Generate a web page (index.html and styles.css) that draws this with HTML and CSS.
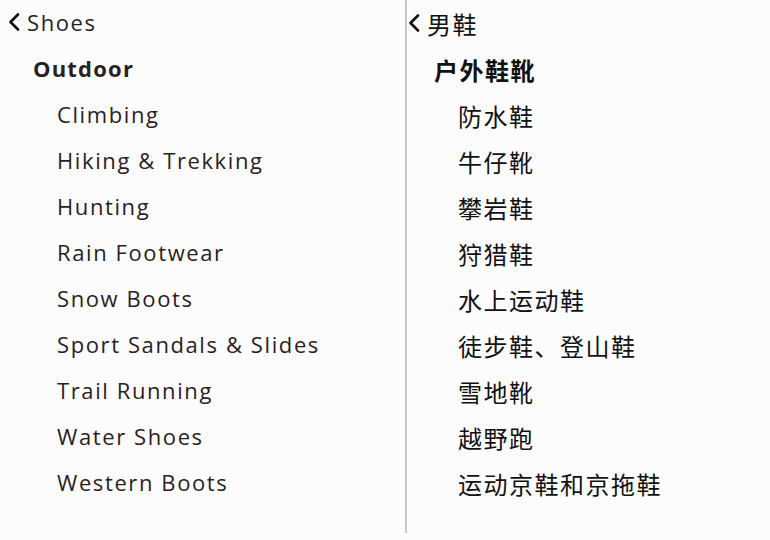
FILE: index.html
```html
<!DOCTYPE html>
<html lang="zh">
<head>
<meta charset="utf-8">
<link rel="stylesheet" href="styles.css">
</head>
<body>
<div class="page">
  <section class="panel panel-en">
    <div class="row back"><svg class="chev" viewBox="0 0 12 18" width="12" height="18"><polyline points="10,1.5 2.5,9 10,16.5" fill="none" stroke="#111" stroke-width="2.6" stroke-linecap="round" stroke-linejoin="round"/></svg><span>Shoes</span></div>
    <div class="row head">Outdoor</div>
    <div class="row item">Climbing</div>
    <div class="row item">Hiking &amp; Trekking</div>
    <div class="row item">Hunting</div>
    <div class="row item">Rain Footwear</div>
    <div class="row item">Snow Boots</div>
    <div class="row item">Sport Sandals &amp; Slides</div>
    <div class="row item">Trail Running</div>
    <div class="row item">Water Shoes</div>
    <div class="row item">Western Boots</div>
  </section>
  <div class="divider"></div>
  <section class="panel panel-zh">
    <div class="row back"><svg class="chev" viewBox="0 0 12 18" width="12" height="18"><polyline points="10,1.5 2.5,9 10,16.5" fill="none" stroke="#111" stroke-width="2.6" stroke-linecap="round" stroke-linejoin="round"/></svg><span>男鞋</span></div>
    <div class="row head">户外鞋靴</div>
    <div class="row item">防水鞋</div>
    <div class="row item">牛仔靴</div>
    <div class="row item">攀岩鞋</div>
    <div class="row item">狩猎鞋</div>
    <div class="row item">水上运动鞋</div>
    <div class="row item">徒步鞋、登山鞋</div>
    <div class="row item">雪地靴</div>
    <div class="row item">越野跑</div>
    <div class="row item">运动京鞋和京拖鞋</div>
  </section>
</div>
</body>
</html>
```
FILE: styles.css
```css
html, body {
  margin: 0;
  padding: 0;
  background: #fdfcfd;
}
.page {
  display: flex;
  width: 770px;
  height: 540px;
  overflow: hidden;
}
.panel {
  display: flex;
  flex-direction: column;
}
.panel-en {
  width: 405px;
  margin-top: -1px;
  font-family: "Open Sans", "Liberation Sans", sans-serif;
  font-size: 22px;
  letter-spacing: 1.6px;
  color: #2a1e22;
}
.divider {
  width: 2px;
  height: 533px;
  background: #c6c6cc;
}
.panel-zh {
  flex: 1;
  font-family: "Noto Sans CJK SC", sans-serif;
  font-size: 24px;
  letter-spacing: 1.5px;
  color: #111;
}
.row {
  height: 46px;
  display: flex;
  align-items: center;
  white-space: nowrap;
}
.panel-en .back { padding-left: 8px; gap: 7px; }
.panel-zh .back { padding-left: 1px; gap: 7px; }
.chev { flex: none; }
.panel-en .head { padding-left: 33px; font-weight: 700; letter-spacing: 1.2px; }
.panel-en .item { padding-left: 57px; }
.panel-zh .head { padding-left: 27px; font-weight: 700; }
.panel-zh .item { padding-left: 51px; }
```
